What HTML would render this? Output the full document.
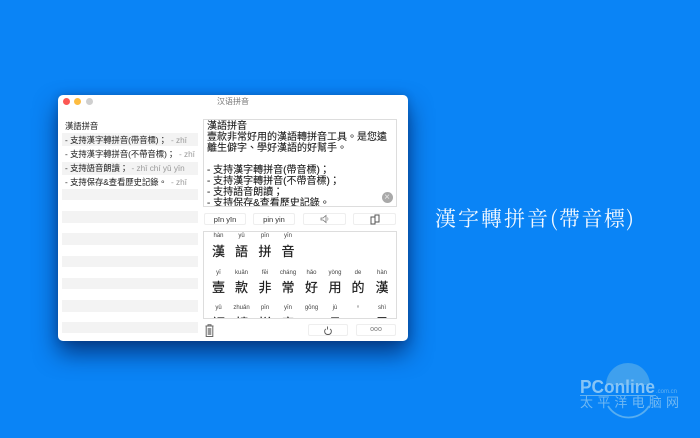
<!DOCTYPE html>
<html><head><meta charset="utf-8">
<style>
html,body{margin:0;padding:0}
body{width:700px;height:438px;overflow:hidden;position:relative;background:#0a84f6;font-family:"Liberation Sans","Noto Sans CJK TC",sans-serif;color:#222}
.a{position:absolute;white-space:nowrap}
#shadow{position:absolute;left:58px;top:95px;width:350px;height:246px;border-radius:5px;box-shadow:0 12px 24px rgba(0,20,75,.68),0 0 8px rgba(0,30,90,.25)}
#win{position:absolute;left:58px;top:95px;width:350px;height:246px;background:#fff;border-radius:5px;filter:blur(.3px)}
.dot{position:absolute;width:7px;height:7px;border-radius:50%}
.st{position:absolute;left:4px;width:136px;height:12px;background:#f3f3f3}
.r{position:absolute;left:7px;font-size:8.3px;line-height:11px;white-space:nowrap;color:#2a2a2a;-webkit-text-stroke:.05px #2a2a2a}
.g{position:absolute;top:0;font-size:8.2px;line-height:11px;color:#999;-webkit-text-stroke:0;white-space:nowrap}
.btn{position:absolute;top:118px;height:12px;width:42px;background:#fff;border:1px solid #eee;box-sizing:border-box;border-radius:2px;font-size:7.5px;line-height:11px;text-align:center;color:#333}
.py{position:absolute;width:26px;text-align:center;font-size:6px;line-height:8px;color:#444;white-space:nowrap}
.hz{position:absolute;width:26px;text-align:center;font-size:13px;line-height:16px;color:#1c1c1c;-webkit-text-stroke:.2px #1c1c1c}
</style></head><body>
<div id="shadow"></div>
<div id="win">
<div class="dot" style="left:5px;top:3px;background:#fc5753"></div>
<div class="dot" style="left:16px;top:3px;background:#fdbc40"></div>
<div class="dot" style="left:28px;top:3px;background:#cfcfcf"></div>
<div class="a" style="left:159px;top:1px;font-size:8px;line-height:12px;color:#777">汉语拼音</div>

<div class="st" style="top:38px;height:13px"></div>
<div class="st" style="top:67px;height:13px"></div>
<div class="st" style="top:94px;height:11px"></div>
<div class="st" style="top:116px"></div>
<div class="st" style="top:138px"></div>
<div class="st" style="top:161px;height:11px"></div>
<div class="st" style="top:183px;height:11px"></div>
<div class="st" style="top:205px"></div>
<div class="st" style="top:227px;height:11px"></div>

<div class="r" style="top:26px">漢語拼音</div>
<div class="r" style="top:40px">- 支持漢字轉拼音(帶音標)；<span class="g" style="left:106px">- zhī</span></div>
<div class="r" style="top:54px">- 支持漢字轉拼音(不帶音標)；<span class="g" style="left:114px">- zhī</span></div>
<div class="r" style="top:68px">- 支持語音朗讀；<span class="g" style="left:66.500px">- zhī chí yǔ yīn</span></div>
<div class="r" style="top:82px">- 支持保存&amp;查看歷史記錄。<span class="g" style="left:106px">- zhī</span></div>

<div class="a" style="left:145px;top:24px;width:194px;height:88px;border:1px solid #ddd;box-sizing:border-box;overflow:hidden;padding:1px 3px 0;font-size:10px;line-height:11px;color:#1c1c1c;-webkit-text-stroke:.1px #1c1c1c;white-space:normal">漢語拼音<br>壹款非常好用的漢語轉拼音工具。是您遠<br>離生僻字、學好漢語的好幫手。<br><br>- 支持漢字轉拼音(帶音標)；<br>- 支持漢字轉拼音(不帶音標)；<br>- 支持語音朗讀；<br>- 支持保存&amp;查看歷史記錄。</div>
<div class="a" style="left:323.500px;top:96.500px;width:11px;height:11px;border-radius:50%;background:#a9a9a9;color:#e8e8e8;font-size:10px;line-height:11px;text-align:center">×</div>

<div class="btn" style="left:146px">pīn yīn</div>
<div class="btn" style="left:195px">pin yin</div>
<div class="btn" style="left:245px;width:43px"><svg width="12" height="10" viewBox="0 0 12 10"><path d="M2 4h2l3-2.500v7L4 6H2z" fill="none" stroke="#777" stroke-width=".8"/><path d="M8.500 3.500q1 1.500 0 3" fill="none" stroke="#999" stroke-width=".7"/></svg></div>
<div class="btn" style="left:295px;width:43px"><svg width="12" height="11" viewBox="0 0 12 11"><path d="M2 3h4v7H2zM6 3V1h4v7H6" fill="none" stroke="#555" stroke-width="1"/></svg></div>

<div class="a" style="left:145px;top:136px;width:194px;height:88px;border:1px solid #ddd;box-sizing:border-box;overflow:hidden">
<div class="py" style="left:1.500px;top:0">hàn</div><div class="py" style="left:24.500px;top:0">yǔ</div><div class="py" style="left:48px;top:0">pīn</div><div class="py" style="left:71px;top:0">yīn</div>
<div class="hz" style="left:1.500px;top:12px">漢</div><div class="hz" style="left:24.500px;top:12px">語</div><div class="hz" style="left:48px;top:12px">拼</div><div class="hz" style="left:71px;top:12px">音</div>
<div class="py" style="left:1.500px;top:37px">yī</div><div class="py" style="left:24.500px;top:37px">kuǎn</div><div class="py" style="left:48px;top:37px">fēi</div><div class="py" style="left:71px;top:37px">cháng</div><div class="py" style="left:94.500px;top:37px">hǎo</div><div class="py" style="left:118px;top:37px">yòng</div><div class="py" style="left:141px;top:37px">de</div><div class="py" style="left:165px;top:37px">hàn</div>
<div class="hz" style="left:1.500px;top:48px">壹</div><div class="hz" style="left:24.500px;top:48px">款</div><div class="hz" style="left:48px;top:48px">非</div><div class="hz" style="left:71px;top:48px">常</div><div class="hz" style="left:94.500px;top:48px">好</div><div class="hz" style="left:118px;top:48px">用</div><div class="hz" style="left:141px;top:48px">的</div><div class="hz" style="left:165px;top:48px">漢</div>
<div class="py" style="left:1.500px;top:72px">yǔ</div><div class="py" style="left:24.500px;top:72px">zhuǎn</div><div class="py" style="left:48px;top:72px">pīn</div><div class="py" style="left:71px;top:72px">yīn</div><div class="py" style="left:94.500px;top:72px">gōng</div><div class="py" style="left:118px;top:72px">jù</div><div class="py" style="left:141px;top:72px">。</div><div class="py" style="left:165px;top:72px">shì</div>
<div class="hz" style="left:1.500px;top:83.500px">語</div><div class="hz" style="left:24.500px;top:83.500px">轉</div><div class="hz" style="left:48px;top:83.500px">拼</div><div class="hz" style="left:71px;top:83.500px">音</div><div class="hz" style="left:94.500px;top:83.500px">工</div><div class="hz" style="left:118px;top:83.500px">具</div><div class="hz" style="left:165px;top:83.500px">是</div>
</div>

<svg class="a" style="left:147px;top:229px" width="9" height="13" viewBox="0 0 9 13"><path d="M.5 2h8M3 2V.7h3V2M1.200 2v10.500h6.600V2" fill="none" stroke="#666" stroke-width="1"/><rect x="2.700" y="4" width="3.600" height="7" fill="#999"/></svg>
<div class="btn" style="left:250px;top:229px;width:40px"><svg width="10" height="11" viewBox="0 0 10 11"><path d="M4.500 1.500v3M3 4C1 5 1 9.500 5 9.500S9 5 7 4" fill="none" stroke="#555" stroke-width=".9"/></svg></div>
<div class="btn" style="left:298px;top:229px;width:40px;color:#777;font-size:7px;line-height:10px">ooo</div>
</div>

<div class="a" style="left:435px;top:204px;font-family:'Noto Serif CJK SC','Liberation Serif',serif;font-size:21px;line-height:28px;color:#f2f8ff;letter-spacing:2px">漢字轉拼音<span style="letter-spacing:1.400px">(帶音標)</span></div>

<svg class="a" style="left:575px;top:358px" width="115" height="72" viewBox="0 0 115 72">
<path d="M31 27A22 22 0 0 1 75 27Z" fill="#3fa0ee"/>
<path d="M33 48A24 24 0 0 0 74 48" fill="none" stroke="#58aef0" stroke-width="1.800"/>
<rect x="5" y="37" width="76" height="1" fill="#62b2f1"/>
<text x="5" y="35" font-family="Liberation Sans" font-size="18" font-weight="bold" textLength="75" lengthAdjust="spacingAndGlyphs" fill="#86c4f5">PConline</text>
<text x="81" y="35" font-family="Liberation Sans" font-size="6" fill="#62b2f1">.com.cn</text>
<text x="5" y="49" font-family="'Noto Sans CJK SC',sans-serif" font-size="13" letter-spacing="4.200" fill="#70b8f3">太平洋电脑网</text>
</svg>
</body></html>
